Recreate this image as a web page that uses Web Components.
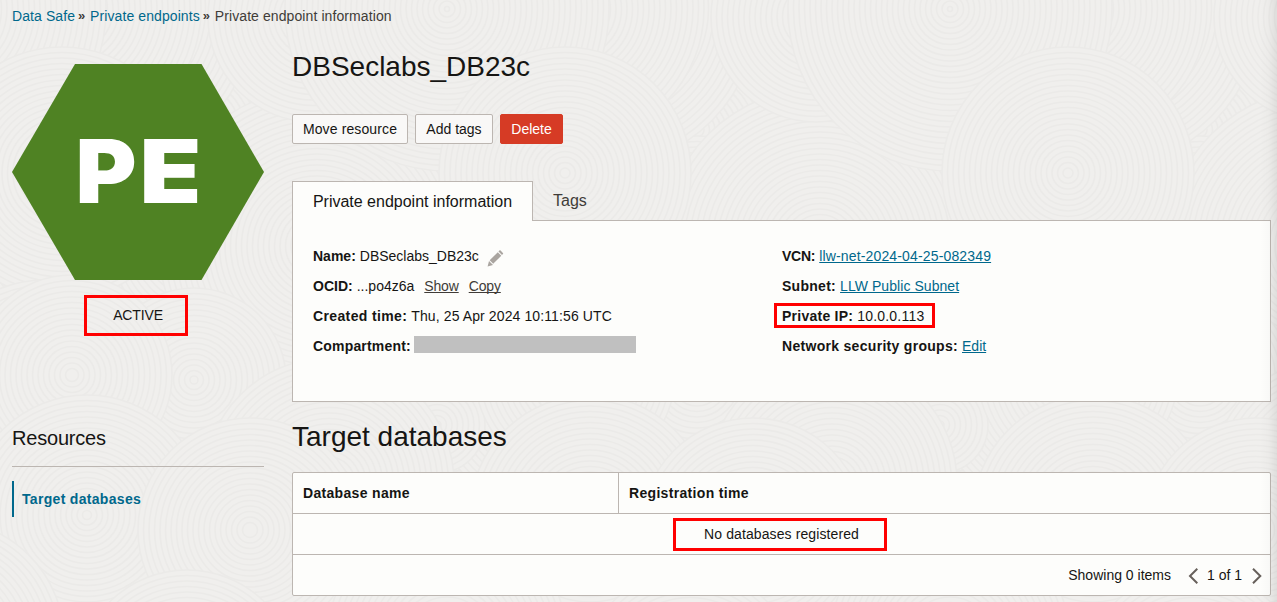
<!DOCTYPE html>
<html lang="en">
<head>
<meta charset="utf-8">
<title>Private endpoint information</title>
<style>
html,body{margin:0;height:602px;overflow:hidden;background:#f0efed}
body{font:14px/20px "Liberation Sans",Arial,sans-serif;color:#161513}
</style>
</head>
<body>
<endpoint-page></endpoint-page>
<script>
const define = (name, html, setup) => {
  const t = document.createElement('template');
  t.innerHTML = html;
  customElements.define(name, class extends HTMLElement {
    constructor() {
      super();
      this.attachShadow({mode: 'open'}).append(t.content.cloneNode(true));
    }
    connectedCallback() { if (setup) setup(this, this.shadowRoot); }
  });
};

// Backdrop: overlapping discs of concentric rings, repeating horizontally
define('ring-backdrop', `<style>:host{position:absolute;inset:0;z-index:-1;display:block}svg{display:block}</style>
<svg width="1277" height="602"><g id="g" fill="none" stroke="#ebeae8" stroke-width="1.6"></g></svg>`,
(el, root) => {
  const discs = [[697,130,150],[940,330,170],[697,246,110],[820,246,158],[600,9,158],[1075,9,132],[816,17,105],[950,9,162],
                 [1068,173,126],[1050,395,115],[940,425,48],[697,380,92],[575,375,100],[832,483,125],[590,515,120],[753,530,112],[950,640,120],[690,680,110]];
  let s = '';
  for (const [x, y, r] of discs)
    for (const dx of [-1006, -503, 0, 503]) {
      if (x + dx + r < 0 || x + dx - r > 1277) continue;
      s += `<circle cx="${x+dx}" cy="${y}" r="${r}" fill="#f0efed"/>`;
      for (let q = r - 5.5; q > 2; q -= 5.5) s += `<circle cx="${x+dx}" cy="${y}" r="${q}"/>`;
    }
  root.getElementById('g').innerHTML = s;
});

define('text-link', `<style>:host{color:#00688c}:host([underlined]){text-decoration:underline;text-underline-offset:1px;text-decoration-thickness:1px;text-decoration-skip-ink:none}:host([muted]){color:#403c38}</style><slot></slot>`);

define('crumb-trail', `<style>:host{display:flex;height:32px;padding-left:12px;align-items:center;color:#403c38;letter-spacing:.09px}i{font-style:normal;width:8px;margin:0 4px 0 3px;font-size:13px;font-weight:bold}</style>
<text-link>Data Safe</text-link><i>»</i><text-link>Private endpoints</text-link><i>»</i><span>Private endpoint information</span>`);

define('status-badge', `<style>:host{display:block}svg{display:block}text{font:900 88px Inter,sans-serif;fill:#fff}
.s{display:flex;width:104px;height:41px;box-sizing:border-box;border:3px solid #f00;margin:15px 0 0 72px;align-items:center;justify-content:center;padding:0 0 2px 4px;letter-spacing:-.15px}</style>
<svg width="252" height="216"><path d="M63 0H189.5L252 108 189.5 216H63L0 108Z" fill="#4f8223"/><text x="63.500" y="139" textLength="61" lengthAdjust="spacingAndGlyphs">P</text><text x="127.500" y="139" textLength="62" lengthAdjust="spacingAndGlyphs">E</text></svg>
<div class="s"><slot></slot></div>`);

define('resource-nav', `<style>:host{display:block;margin-top:88px}h2{font-size:20px;line-height:28px;font-weight:400;margin:0;padding-bottom:14px;border-bottom:1px solid #bcb6b1;letter-spacing:-.2px}
div{margin-top:14px;height:36px;border-left:2px solid #00688c;padding-left:8px;font-weight:bold;color:#00688c;line-height:36px;letter-spacing:.31px}</style>
<h2>Resources</h2><div><slot></slot></div>`);

define('action-button', `<style>:host{display:block;box-sizing:border-box;height:30px;line-height:28px;border:1px solid #bcb6b1;border-radius:2px;background:#f9f8f7;text-align:center}
:host([danger]){background:#d63b25;border-color:#d63b25;color:#fff}</style><slot></slot>`);

define('info-row', `<style>:host{display:flex;height:30px;align-items:center;white-space:pre}b{margin-right:4px;letter-spacing:var(--label-spacing,0)}</style><b></b><slot></slot>`,
(el, root) => { root.querySelector('b').textContent = el.getAttribute('label'); });

define('info-panel', `<style>:host{display:block;position:relative}
.tabs{display:flex;height:40px;font-size:16px;line-height:39px}
.on{box-sizing:border-box;width:241px;height:40px;border:1px solid #bcb6b1;border-bottom:0;background:#fdfdfb;text-align:center;position:relative;z-index:1}
.off{padding-left:20px;color:#403c38}
.box{box-sizing:border-box;height:182px;margin-top:-1px;border:1px solid #bcb6b1;background:#fdfdfb;display:grid;grid-template-columns:469px 1fr;padding:20px 0 0 20px}
svg{margin-left:8px;position:relative;top:2px}.mask{width:222px;height:17px;background:#c0c0c0;margin:-3px 0 0 -1px}
.red{position:absolute;left:482px;top:122px;width:161px;height:25px;box-sizing:border-box;border:3px solid #f00}
.gap{margin-left:10px;letter-spacing:-.15px}</style>
<div class="tabs"><div class="on"><span>Private endpoint information</span></div><div class="off"><span>Tags</span></div></div>
<div class="box"><div>
<info-row label="Name:"><span>DBSeclabs_DB23c</span><svg width="17" height="17"><path d="M.6 16.4L2 11 6 15ZM2.7 10.3L10.8 2.2 14.3 5.7 6.2 13.8ZM11.5 1.5L12.4.6Q13 0 13.6.6L15.9 2.9Q16.5 3.5 15.9 4.1L15 5Z" fill="#aaa5a0"/></svg></info-row>
<info-row label="OCID:"><span>...po4z6a</span><text-link class="gap" underlined muted>Show</text-link><text-link class="gap" underlined muted>Copy</text-link></info-row>
<info-row label="Created time:" style="--label-spacing:.37px"><span style="letter-spacing:.11px">Thu, 25 Apr 2024 10:11:56 UTC</span></info-row>
<info-row label="Compartment:" style="--label-spacing:.18px"><div class="mask"></div></info-row>
</div><div>
<info-row label="VCN:" style="--label-spacing:-.25px"><text-link underlined style="letter-spacing:.15px">llw-net-2024-04-25-082349</text-link></info-row>
<info-row label="Subnet:" style="--label-spacing:.28px"><text-link underlined style="letter-spacing:.06px">LLW Public Subnet</text-link></info-row>
<info-row label="Private IP:" style="--label-spacing:.25px"><span style="letter-spacing:.2px">10.0.0.113</span></info-row>
<info-row label="Network security groups:" style="--label-spacing:.3px"><text-link underlined>Edit</text-link></info-row>
</div></div><div class="red"></div>`);

define('database-table', `<style>:host{display:block;box-sizing:border-box;height:124px;border:1px solid #bcb6b1;border-radius:2px;background:#fdfdfb}
.r{display:flex;height:40px;align-items:center;border-bottom:1px solid #bcb6b1}.h{font-weight:bold;align-items:stretch;line-height:40px;letter-spacing:.32px}
.h div{padding-left:10px}.h div:first-child{width:315px;border-right:1px solid #bcb6b1}
.m{box-sizing:border-box;width:214px;height:33px;border:3px solid #f00;margin-left:380px;padding-left:3px;display:flex;align-items:center;justify-content:center;letter-spacing:.1px}
.f{border:0;justify-content:flex-end;padding-right:8px}.f svg{margin:2px 0 0}.f .c{margin:0 10px 0 9px}.f .n{margin-right:17px}</style>
<div class="r h"><div>Database name</div><div>Registration time</div></div>
<div class="r"><div class="m"><span>No databases registered</span></div></div>
<div class="r f"><span class="n">Showing 0 items</span><svg width="10" height="16" fill="none" stroke="#67605b" stroke-width="2"><path d="M9.300 .8L2 8L9.300 15.200"/></svg><span class="c">1 of 1</span><svg width="10" height="16" fill="none" stroke="#67605b" stroke-width="2"><path d="M1 .8L8.300 8L1 15.200"/></svg></div>`);

define('endpoint-page', `<style>:host{display:block;position:relative;z-index:0;height:602px;overflow:hidden}
.cols{display:grid;grid-template-columns:252px 979px;column-gap:28px;padding-left:12px}
.left{padding-top:32px}h1{font-size:28px;line-height:36px;font-weight:400;margin:0}
.bar{display:flex;gap:7px;margin:29px 0 37px}
.right{padding-top:17px}.t2{margin:17px 0 17px}
.edge{position:absolute;right:0;top:0;width:17px;height:602px;background:linear-gradient(90deg,#0000,#00000004 50%,#00000012)}</style>
<ring-backdrop></ring-backdrop>
<crumb-trail></crumb-trail>
<div class="cols"><div class="left"><status-badge>ACTIVE</status-badge><resource-nav>Target databases</resource-nav></div>
<div class="right"><h1><span>DBSeclabs_DB23c</span></h1>
<div class="bar"><action-button style="width:116px;letter-spacing:.12px">Move resource</action-button><action-button style="width:78px">Add tags</action-button><action-button danger style="width:63px">Delete</action-button></div>
<info-panel></info-panel><h1 class="t2"><span>Target databases</span></h1><database-table></database-table></div></div>
<div class="edge"></div>`);
</script>
</body>
</html>
